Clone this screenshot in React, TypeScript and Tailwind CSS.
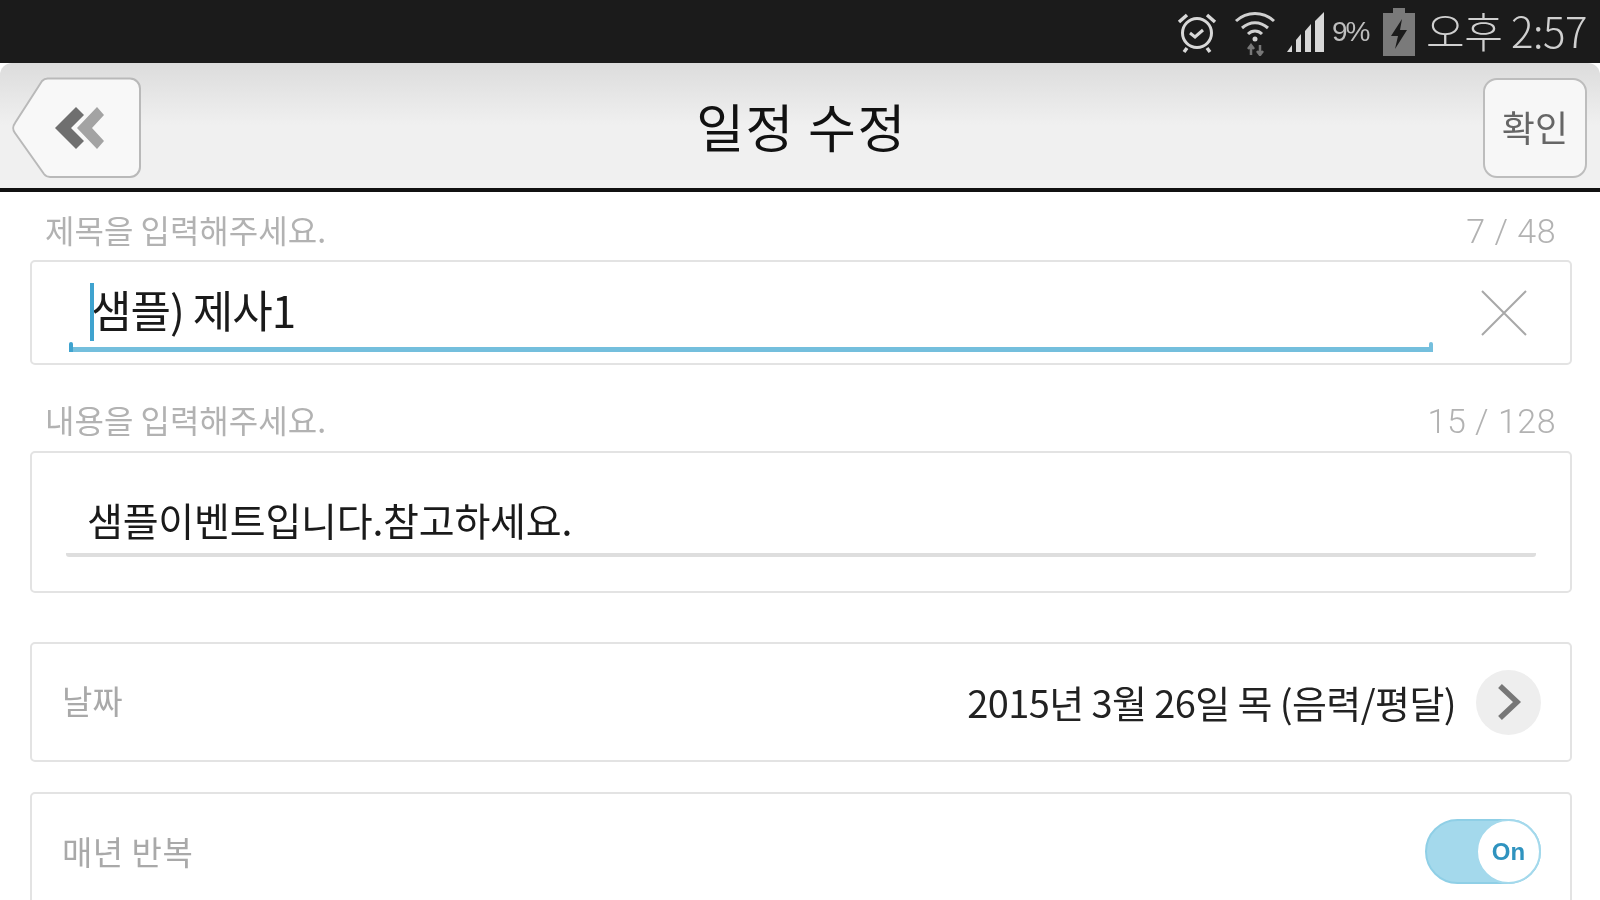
const font = { fontFamily: '"Noto Sans CJK KR", "Liberation Sans", sans-serif' };

const StatusBar = () => (
    <div className="h-[63px] bg-[#1b1b1b] flex items-center justify-end pr-[13px] text-[#d4d4d4]">
        {/* alarm */}
        <svg width="44" height="44" viewBox="0 0 44 44" fill="none" stroke="#d8d8d8" strokeWidth="3" className="mr-[14px]">
            <circle cx="22" cy="23" r="14.5" />
            <path d="M15 23l5 4 8-7" strokeWidth="3" />
            <path d="M4 12l8-7M40 12l-8-7M12 38l-3 4M32 38l3 4" strokeWidth="3.5" />
        </svg>
        {/* wifi */}
        <svg width="44" height="48" viewBox="0 0 44 48" fill="none" stroke="#d0d0d0" strokeWidth="3" className="mr-[9px]">
            <path d="M3 13C14 3 30 3 41 13" />
            <path d="M9 20c8-7 18-7 26 0" />
            <path d="M15 26c4-4 10-4 14 0" />
            <circle cx="22" cy="31" r="2.5" fill="#d0d0d0" stroke="none" />
            <path d="M18 47V37M15 41l3-4 3 4M27 37v10M24 43l3 4 3-4" stroke="#777" strokeWidth="2.5" />
        </svg>
        {/* signal */}
        <svg width="40" height="42" viewBox="0 0 40 42" className="mt-[1px]">
            <path d="M1 41l5-7v7z" fill="#d8d8d8" />
            <path d="M10 41V29l5-6v18z" fill="#d8d8d8" />
            <path d="M19 41V20l6-7v28z" fill="#d8d8d8" />
            <path d="M29 41V10l9-9v40z" fill="#d8d8d8" />
        </svg>
        <span className="text-[28px] leading-none ml-[6px] w-[39px] tracking-[-2px] text-[#bdbdbd]" style={{ fontFamily: '"Liberation Sans", sans-serif' }}>9%</span>
        {/* battery */}
        <svg width="32" height="48" viewBox="0 0 32 48" className="ml-[12px]">
            <path d="M10 0h12v5h10v43H0V5h10z" fill="#7a7a7a" />
            <path d="M19 11L8 28h7l-3 13 12-19h-7z" fill="#1b1b1b" />
        </svg>
        <span className="text-[42px] leading-none ml-[11px] -mt-[4px] tracking-[-0.5px] text-[#d0d0d0]" style={{ ...font, fontWeight: 300 }}>오후 2:57</span>
    </div>
);

const Header = () => (
    <div className="h-[129px] bg-gradient-to-b from-[#dcdcdc] via-[#f0f0f0] to-[#f0f0f0] rounded-t-[12px] border-b-[4px] border-[#111] flex items-center justify-between pl-[12px] pr-[13px]">
        <svg width="130" height="102" viewBox="0 0 130 102" className="mt-[5px]">
            <path d="M36 1.500H118a10 10 0 0 1 10 10V90a10 10 0 0 1-10 10H38a8 8 0 0 1-6-3L3 56a8 8 0 0 1 0-10L30 4a8 8 0 0 1 6-2.500z" fill="#f8f8f8" stroke="#b9b9b9" strokeWidth="2" />
            <path d="M43 51l21-21 8 8-13 13 13 13-8 8z" fill="#6f6f6f" />
            <path d="M65 51l20-21 7 8-12 13 12 13-7 8z" fill="#a3a3a3" />
        </svg>
        <h1 className="text-[52px] leading-none text-[#111] tracking-[1.5px] pr-[22px]" style={{ ...font, fontWeight: 400 }}>일정 수정</h1>
        <button className="w-[104px] h-[100px] rounded-[14px] border-2 border-[#bdbdbd] bg-[#f7f7f7] text-[36px] text-[#666] mt-[5px] pb-[4px]" style={font}>확인</button>
    </div>
);

const FieldLabel = ({ text, count, height }: { text: string; count: string; height: string }) => (
    <div className={`${height} flex items-center justify-between pl-[15px] pr-[16px] pt-[9px] text-[#b2b2b2]`}>
        <span className="text-[32px] leading-none -mt-[4px]" style={font}>{text}</span>
        <span className="text-[34px] leading-none tracking-[0.5px]" style={{ fontFamily: '"Roboto", sans-serif', fontWeight: 300 }}>{count}</span>
    </div>
);

export default function App() {
    return (
        <div className="w-[1600px] h-[900px] overflow-hidden bg-white blur-[0.6px]" style={font}>
            <StatusBar />
            <Header />
            <div className="pl-[30px] pr-[28px]">
                <FieldLabel text="제목을 입력해주세요." count="7 / 48" height="h-[68px]" />
                <div className="h-[105px] border-2 border-[#e3e3e3] rounded-[5px] flex items-start pl-[37px]">
                    <div className="w-[1364px] h-[90px] border-b-[5px] border-[#74bfdd] relative flex items-center pl-[22px] pt-[9px]">
                        <span className="absolute left-[21px] top-[21px] w-[4px] h-[58px] bg-[#3fa3cf]" />
                        <span className="absolute left-0 bottom-[-5px] w-[4px] h-[10px] bg-[#3fa3cf] rounded-t-[2px]" />
                        <span className="absolute right-0 bottom-[-5px] w-[4px] h-[10px] bg-[#74bfdd] rounded-t-[2px]" />
                        <span className="text-[44px] leading-none text-[#1a1a1a] tracking-[-1px]">샘플) 제사1</span>
                    </div>
                    <svg width="46" height="46" viewBox="0 0 46 46" fill="none" stroke="#a8a8a8" strokeWidth="2" className="ml-[48px] mt-[28px]">
                        <path d="M1 1l44 44M45 1L1 45" />
                    </svg>
                </div>
                <div className="h-[16px]" />
                <FieldLabel text="내용을 입력해주세요." count="15 / 128" height="h-[70px]" />
                <div className="h-[142px] border-2 border-[#e3e3e3] rounded-[5px] px-[34px]">
                    <div className="h-[104px] border-b-[4px] border-[#dedede] rounded-b-[3px] flex items-end pl-[21px] pb-[11px]">
                        <span className="text-[39px] leading-[46px] text-[#1a1a1a] tracking-[-0.2px]">샘플이벤트입니다.참고하세요.</span>
                    </div>
                </div>
                <div className="h-[49px]" />
                <div className="h-[120px] border-2 border-[#e3e3e3] rounded-[5px] flex items-center pl-[30px] pr-[29px]">
                    <span className="text-[33px] text-[#a9a9a9] -mt-[2px]">날짜</span>
                    <span className="ml-auto text-[38px] text-[#222] tracking-[-0.6px] -mt-[2px]">2015년 3월 26일 목 (음력/평달)</span>
                    <span className="ml-[20px] w-[65px] h-[65px] rounded-full bg-[#eeeeee] flex items-center justify-center">
                        <svg width="26" height="38" viewBox="0 0 26 38" fill="none" stroke="#777" strokeWidth="5.5">
                            <path d="M4 3l17 16L4 35" />
                        </svg>
                    </span>
                </div>
                <div className="h-[30px]" />
                <div className="h-[130px] border-2 border-[#e3e3e3] rounded-[5px] flex items-start pl-[30px] pr-[29px] pt-[25px]">
                    <span className="text-[33px] leading-[64px] tracking-[0.5px] text-[#a9a9a9]">매년 반복</span>
                    <div className="ml-auto w-[116px] h-[65px] rounded-full bg-[#a4d9ec] border-2 border-[#8fcfe6] relative">
                        <span className="absolute right-[-2px] top-[-2px] w-[65px] h-[65px] rounded-full bg-white border-2 border-[#a4d9ec] flex items-center justify-center text-[24px] font-bold text-[#2f93bf]" style={{ fontFamily: '"Liberation Sans", sans-serif' }}>On</span>
                    </div>
                </div>
            </div>
        </div>
    );
}
